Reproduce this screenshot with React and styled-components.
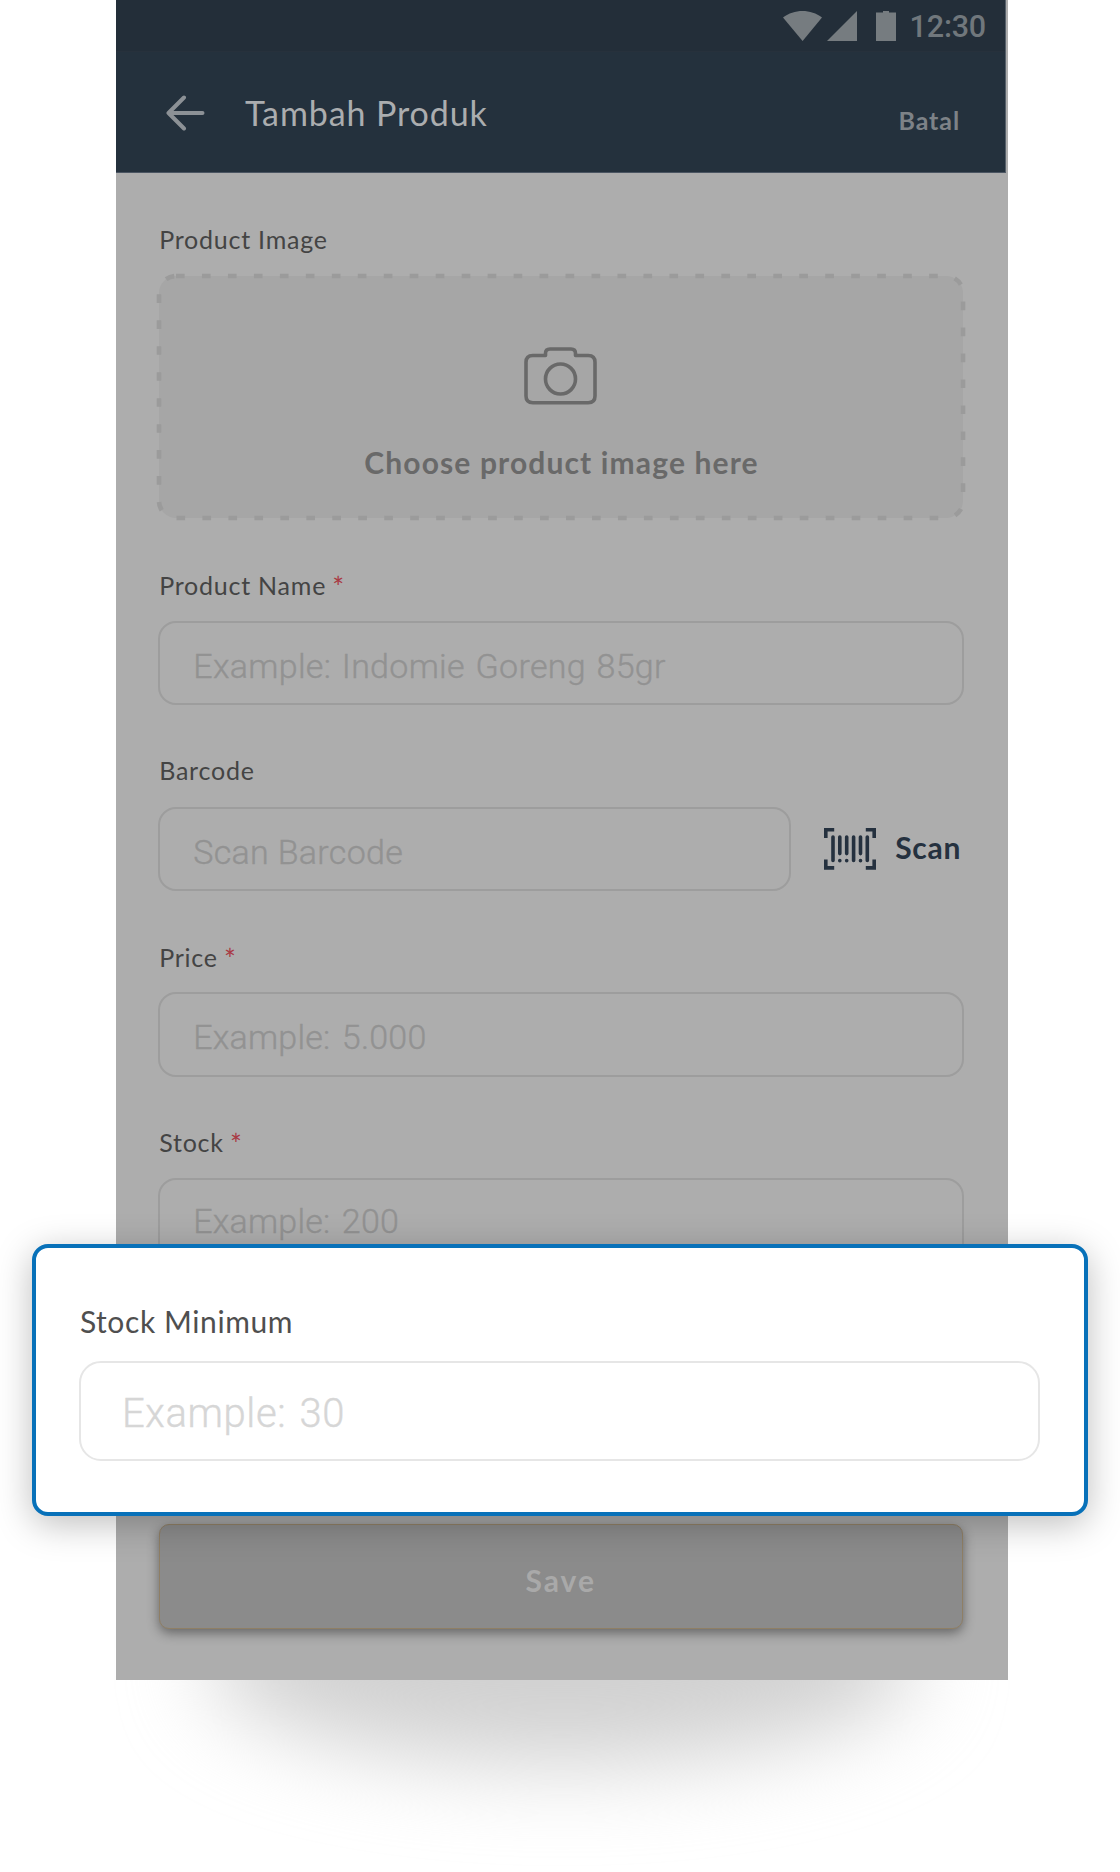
import React from "react";
import styled, { createGlobalStyle } from "styled-components";

const GlobalStyle = createGlobalStyle`
  *, *::before, *::after { box-sizing: border-box; }
  body { margin: 0; background: #fff; font-family: Lato, "Open Sans", sans-serif; }
`;

const Stage = styled.main`
  position: relative;
  width: 1120px;
  height: 1872px;
  overflow: hidden;
  background: #fff;
`;

const FloorShadow = styled.div`
  position: absolute;
  left: 208px;
  top: 1560px;
  width: 708px;
  height: 204px;
  border-radius: 50%;
  background: #d1d1d1;
  filter: blur(43px);
`;

const Phone = styled.section`
  position: relative;
  width: 892px;
  height: 1680px;
  margin-left: 116px;
  background: #adadad;
`;

const TopArea = styled.header`
  width: 890px;
  height: 173px;
  background: #24313d;
  border-right: 1px solid #56606a;
  border-bottom: 1px solid #4b5562;
`;

const StatusBar = styled.div`
  display: flex;
  align-items: flex-start;
  justify-content: flex-end;
  height: 52px;
  padding: 11px 19px 0 0;
  background: #232e39;
  border-bottom: 1px solid #27313c;
  color: #767c80;
`;

const Clock = styled.span`
  margin: -2px 0 0 14px;
  font: 500 30.5px/36px Roboto, sans-serif;
  letter-spacing: -0.2px;
  color: #70777c;
`;

const AppBar = styled.div`
  display: flex;
  align-items: center;
  height: 120px;
  padding: 2px 46px 0 49px;
`;

const Title = styled.h1`
  flex: 1;
  margin: -1px 0 0 40px;
  font-size: 34px;
  font-weight: 400;
  line-height: 42px;
  letter-spacing: 0.9px;
  color: #abadaf;
`;

const Cancel = styled.span`
  margin-top: 14px;
  font-size: 25px;
  font-weight: 700;
  line-height: 30px;
  letter-spacing: 0.9px;
  margin-right: -1px;
  color: #7d8287;
`;

const Form = styled.div`
  display: flex;
  flex-direction: column;
  padding: 51px 44px 0 42.3px;
`;

const Field = styled.div`
  display: flex;
  flex-direction: column;
  margin-bottom: ${(p) => p.$after || "50.6px"};
`;

const Label = styled.label`
  display: block;
  margin-bottom: ${(p) => p.$gap || "20.8px"};
  padding-left: 0.9px;
  font-size: ${(p) => (p.$large ? "30px" : "25px")};
  line-height: ${(p) => (p.$large ? "36px" : "30px")};
  letter-spacing: ${(p) => (p.$large ? "0.6px" : "0.77px")};
  color: ${(p) => (p.$large ? "#4f4f4f" : "#444")};
`;

const Required = styled.span`
  margin-left: -1px;
  font-size: 28px;
  line-height: 0;
  vertical-align: -3px;
  color: #a93a44;
`;

const Row = styled.div`
  display: flex;
  align-items: center;
`;

const Input = styled.div`
  flex: none;
  width: ${(p) => p.$width || "805.5px"};
  height: ${(p) => (p.$large ? "100.5px" : "84.3px")};
  padding: ${(p) => p.$pad || "23.5px 0 0 33px"};
  border: 2px solid ${(p) => (p.$large ? "#e6e6e6" : "#9d9d9d")};
  border-radius: ${(p) => (p.$large ? "22px" : "18px")};
  font-family: Roboto, sans-serif;
  font-weight: 300;
  font-size: ${(p) => (p.$large ? "40px" : "34px")};
  line-height: ${(p) => (p.$large ? "46px" : "40px")};
  letter-spacing: ${(p) => p.$spacing || "0.3px"};
  word-spacing: ${(p) => p.$words || "2px"};
  color: ${(p) => (p.$large ? "#d6d6d6" : "#929292")};
  -webkit-text-stroke: 0.4px currentColor;
  white-space: nowrap;
`;

const DropZone = styled.div`
  position: relative;
  display: flex;
  flex-direction: column;
  align-items: center;
  width: 804px;
  height: 242px;
  margin: 0 0 52px 0.7px;
  padding: 71px 0 0;
  border-radius: 17px;
  background: #a6a6a6;
`;

const DashedEdge = styled.svg`
  position: absolute;
  inset: 0;
  width: 804px;
  height: 242px;
  overflow: visible;
`;

const DropText = styled.span`
  margin: 39px 0 0 1px;
  font-size: 30px;
  font-weight: 700;
  line-height: 36px;
  letter-spacing: 1.13px;
  color: #696969;
`;

const ScanButton = styled.div`
  display: flex;
  align-items: center;
  gap: 19px;
  margin: -1px 0 0 33.5px;
  font-size: 30px;
  font-weight: 700;
  line-height: 36px;
  letter-spacing: 0.7px;
  color: #25313f;
`;

const ScanText = styled.span`
  margin-top: -3px;
`;

const SaveButton = styled.div`
  position: absolute;
  left: 42.5px;
  bottom: 51px;
  width: 804.5px;
  height: 105px;
  padding-top: 35px;
  border: 1px solid #8f7f65;
  border-radius: 10px;
  background: #8b8b8b;
  box-shadow: 0 4px 12px rgba(0, 0, 0, 0.42);
  text-align: center;
  font-size: 30px;
  font-weight: 700;
  line-height: 40px;
  letter-spacing: 2px;
  color: #a9a9a9;
`;

const Spotlight = styled.section`
  position: absolute;
  left: 32px;
  top: 1244px;
  width: 1056px;
  height: 272px;
  padding: 55px 0 0 43px;
  border: 4px solid #0871b9;
  border-radius: 16px;
  background: #fff;
  box-shadow: 0 8px 36px rgba(0, 0, 0, 0.26);
`;

const SignalIcons = () => (
  <svg width="113" height="30" viewBox="0 0 113 30" fill="currentColor">
    <path d="M0 6.6C11-2.2 28-2.2 39 6.6L19.6 30Z" />
    <path d="M44 30L74 0V30Z" />
    <path d="M93 1.6h7V0h6v1.6h7V30H93Z" />
  </svg>
);

const BackArrow = () => (
  <svg width="40" height="36" viewBox="0 0 40 36" fill="none" stroke="#8c9196" strokeWidth="4" strokeLinecap="round" strokeLinejoin="round">
    <path d="M19 2.5L3.5 18L19 33.5M3.5 18H37.5" />
  </svg>
);

const CameraIcon = () => (
  <svg width="73" height="58" viewBox="0 0 73 58" fill="none" stroke="#696969" strokeWidth="3.6" strokeLinejoin="round">
    <path d="M21.5 8.5V6.4Q21.5 2 26 2H47Q51.5 2 51.5 6.4V8.5H64.2Q71 8.5 71 15.3V49Q71 55.7 64.2 55.7H8.8Q2 55.7 2 49V15.3Q2 8.5 8.8 8.5Z" />
    <circle cx="36.5" cy="32" r="15" />
  </svg>
);

const BarcodeIcon = () => (
  <svg width="52" height="42" viewBox="0 0 52 42" fill="none" stroke="currentColor" strokeWidth="3.6" strokeLinecap="round">
    <path strokeLinecap="butt" d="M1.8 10V1.8H10.2M41.8 1.8H50.2V10M50.2 31.5V39.9H41.8M10.2 39.9H1.8V31.5" />
    <path d="M9 9V32.5M15.8 9V25.6M22.7 9V25.6M29.6 9V32.5M36.5 9V25.6M43.3 9V32.5M15.8 32.6V32.7M22.7 32.6V32.7M36.5 32.6V32.7" />
  </svg>
);

export default function App() {
  return (
    <Stage>
      <GlobalStyle />
      <FloorShadow />
      <Phone>
        <TopArea>
          <StatusBar>
            <SignalIcons />
            <Clock>12:30</Clock>
          </StatusBar>
          <AppBar>
            <BackArrow />
            <Title>Tambah Produk</Title>
            <Cancel>Batal</Cancel>
          </AppBar>
        </TopArea>
        <Form>
          <Label $gap="22px">Product Image</Label>
          <DropZone>
            <DashedEdge>
              <rect width="804" height="242" rx="17" fill="none" stroke="#9b9b9b" strokeWidth="4.6" strokeDasharray="8.65 17.32" />
            </DashedEdge>
            <CameraIcon />
            <DropText>Choose product image here</DropText>
          </DropZone>
          <Field $after="50px">
            <Label>Product Name <Required>*</Required></Label>
            <Input>Example: Indomie Goreng 85gr</Input>
          </Field>
          <Field $after="50.4px">
            <Label $gap="21.8px">Barcode</Label>
            <Row>
              <Input $width="632.4px" $pad="22.8px 0 0 33px" $spacing="0.3px" $words="0">Scan Barcode</Input>
              <ScanButton>
                <BarcodeIcon />
                <ScanText>Scan</ScanText>
              </ScanButton>
            </Row>
          </Field>
          <Field $after="50.4px">
            <Label>Price <Required>*</Required></Label>
            <Input $pad="22.6px 0 0 33px" $spacing="0.2px" $words="3px">Example: 5.000</Input>
          </Field>
          <Field>
            <Label>Stock <Required>*</Required></Label>
            <Input $pad="21px 0 0 33px" $spacing="0.2px" $words="3px">Example: 200</Input>
          </Field>
        </Form>
        <SaveButton>Save</SaveButton>
      </Phone>
      <Spotlight>
        <Label $large $gap="21.7px">Stock Minimum</Label>
        <Input $large $width="961px" $pad="28px 0 0 41px" $spacing="0.6px" $words="3px">Example: 30</Input>
      </Spotlight>
    </Stage>
  );
}
